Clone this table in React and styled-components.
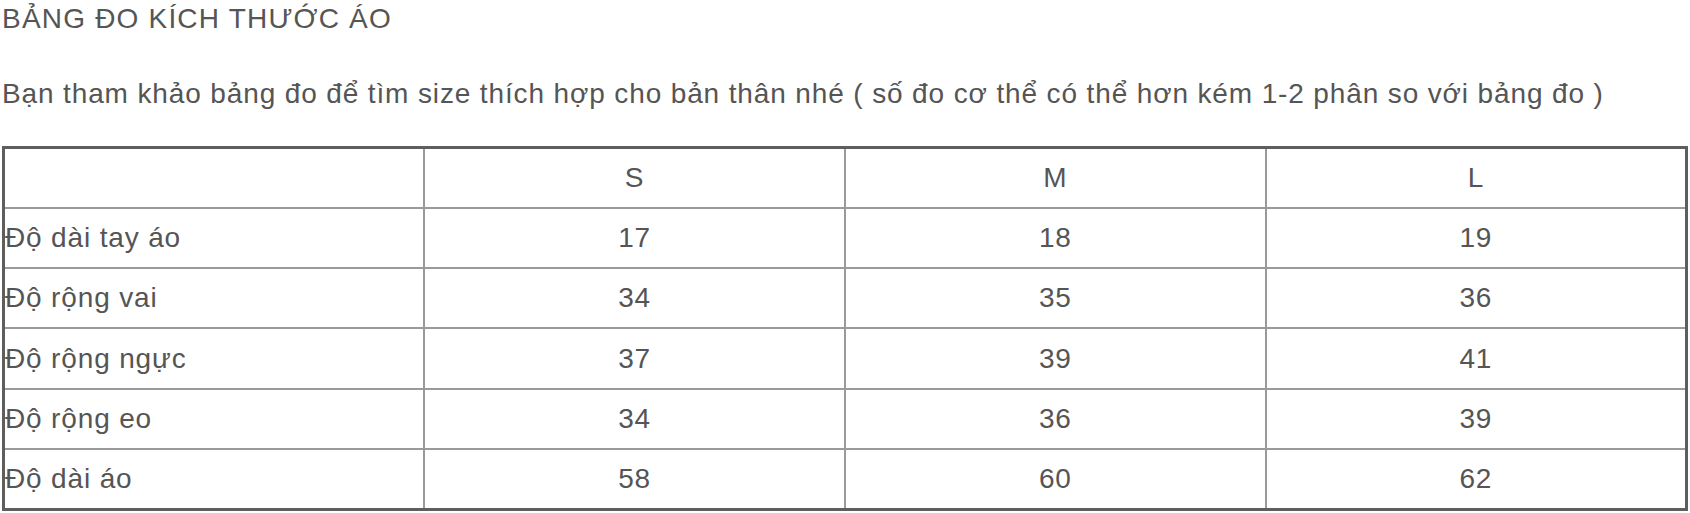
import React from "react";
import styled, { createGlobalStyle } from "styled-components";

const Global = createGlobalStyle`
  html, body { margin: 0; padding: 0; background: #fff; }
  body { font-family: "Liberation Sans", Arial, sans-serif; color: #555; }
`;

const Page = styled.div`
  padding: 0 2px;
  display: flex;
  flex-direction: column;
`;

const Title = styled.h2`
  margin: 0;
  font-weight: 400;
  font-size: 28px;
  letter-spacing: 1.2px;
  line-height: 38px;
  color: #555;
`;

const Intro = styled.p`
  margin: 37px 0 0;
  font-size: 28px;
  letter-spacing: 0.87px;
  line-height: 38px;
  color: #555;
`;

const Table = styled.table`
  margin-top: 33px;
  width: 1686px;
  height: 365px;
  table-layout: fixed;
  border-collapse: collapse;
  border: 3px solid #5e5e5e;
`;

const Cell = styled.td`
  border: 2px solid #9a9a9a;
  padding: 0;
  font-size: 28px;
  letter-spacing: 0.85px;
  color: #555;
  text-align: ${(p) => (p.$label ? "left" : "center")};
  vertical-align: middle;
`;

const sizes = ["S", "M", "L"];
const rows = [
  ["Độ dài tay áo", 17, 18, 19],
  ["Độ rộng vai", 34, 35, 36],
  ["Độ rộng ngực", 37, 39, 41],
  ["Độ rộng eo", 34, 36, 39],
  ["Độ dài áo", 58, 60, 62],
];

export default function App() {
  return (
    <Page>
      <Global />
      <Title>BẢNG ĐO KÍCH THƯỚC ÁO</Title>
      <Intro>
        Bạn tham khảo bảng đo để tìm size thích hợp cho bản thân nhé ( số đo cơ thể có thể hơn kém 1-2 phân so với bảng đo )
      </Intro>
      <Table>
        <tbody>
          <tr>
            <Cell $label />
            {sizes.map((s) => (
              <Cell key={s}>{s}</Cell>
            ))}
          </tr>
          {rows.map(([label, ...vals]) => (
            <tr key={label}>
              <Cell $label>{label}</Cell>
              {vals.map((v, i) => (
                <Cell key={i}>{v}</Cell>
              ))}
            </tr>
          ))}
        </tbody>
      </Table>
    </Page>
  );
}
